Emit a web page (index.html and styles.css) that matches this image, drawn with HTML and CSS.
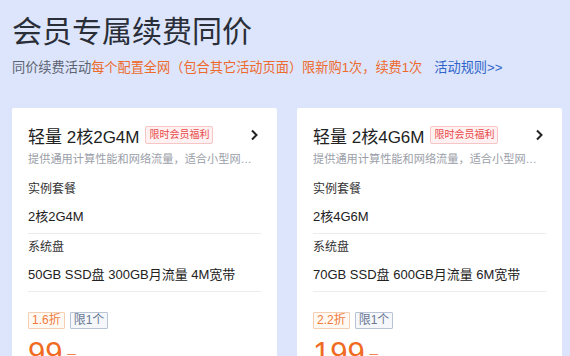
FILE: index.html
```html
<!DOCTYPE html>
<html lang="zh">
<head>
<meta charset="utf-8">
<link rel="stylesheet" href="styles.css">
</head>
<body>
<div class="page">
  <h1 class="title">会员专属续费同价</h1>
  <p class="sub"><span class="gray">同价续费活动</span><span class="orange">每个配置全网（包合其它活动页面）限新购1次，续费1次</span><a class="rule">活动规则&gt;&gt;</a></p>
  <div class="cards">
    <div class="card">
      <div class="head">
        <span class="name">轻量 2核2G4M</span>
        <span class="badge">限时会员福利</span>
        <svg class="chev" width="9" height="12" viewBox="0 0 9 12"><path d="M2 1.5 L6.5 6 L2 10.5" fill="none" stroke="#222" stroke-width="2"/></svg>
      </div>
      <div class="desc">提供通用计算性能和网络流量，适合小型网站、博客等场景</div>
      <div class="sec">
        <div class="label">实例套餐</div>
        <div class="value">2核2G4M</div>
      </div>
      <div class="sec">
        <div class="label">系统盘</div>
        <div class="value">50GB SSD盘 300GB月流量 4M宽带</div>
      </div>
      <div class="tags"><span class="tag disc">1.6折</span><span class="tag lim">限1个</span></div>
      <div class="price"><span class="num">99</span><span class="unit">元</span></div>
    </div>
    <div class="card">
      <div class="head">
        <span class="name">轻量 2核4G6M</span>
        <span class="badge">限时会员福利</span>
        <svg class="chev" width="9" height="12" viewBox="0 0 9 12"><path d="M2 1.5 L6.5 6 L2 10.5" fill="none" stroke="#222" stroke-width="2"/></svg>
      </div>
      <div class="desc">提供通用计算性能和网络流量，适合小型网站、博客等场景</div>
      <div class="sec">
        <div class="label">实例套餐</div>
        <div class="value">2核4G6M</div>
      </div>
      <div class="sec">
        <div class="label">系统盘</div>
        <div class="value">70GB SSD盘 600GB月流量 6M宽带</div>
      </div>
      <div class="tags"><span class="tag disc">2.2折</span><span class="tag lim">限1个</span></div>
      <div class="price"><span class="num">199</span><span class="unit">元</span></div>
    </div>
  </div>
</div>
</body>
</html>
```
FILE: styles.css
```css
* { box-sizing: border-box; }
html, body { margin: 0; padding: 0; }
body {
  background: #dce5fb;
  font-family: "Liberation Sans", "Noto Sans CJK SC", sans-serif;
  color: #222;
  overflow: hidden;
  height: 356px;
}
.page { padding: 0 9px 0 12px; }
.title {
  margin: 0;
  padding-top: 12px;
  font-size: 30px;
  line-height: 40px;
  font-weight: 400;
  color: #2a2e38;
}
.sub {
  margin: 6px 0 0;
  font-size: 13.2px;
  line-height: 20px;
}
.gray { color: #5b6270; }
.orange { color: #ee6a2c; }
.rule { color: #2f64c9; margin-left: 12px; }
.cards {
  display: grid;
  grid-template-columns: 265px 265px;
  gap: 20px;
  margin-top: 30px;
}
.card {
  background: #fff;
  border-radius: 2px;
  padding: 15px 16px 0;
  height: 260px;
}
.head {
  display: flex;
  align-items: center;
  height: 24px;
}
.name { font-size: 17px; color: #222; }
.badge {
  margin-left: 6px;
  font-size: 10px;
  line-height: 14px;
  padding: 1px 3px;
  color: #e84a4a;
  background: #fff1f1;
  border: 1px solid #f6c6c6;
  border-radius: 2px;
}
.chev { margin-left: auto; margin-right: 2px; }
.desc {
  margin-top: 3px;
  font-size: 11.2px;
  line-height: 18px;
  color: #9a9ea8;
  white-space: nowrap;
  overflow: hidden;
  text-overflow: ellipsis;
  width: 231px;
}
.sec {
  border-bottom: 1px solid #ececee;
  padding-bottom: 6px;
}
.label {
  margin-top: 12px;
  font-size: 12px;
  line-height: 18px;
  color: #333;
}
.sec + .sec .label { margin-top: 4px; }
.value {
  margin-top: 9px;
  font-size: 13px;
  line-height: 20px;
  color: #222;
}
.tags { display: flex; gap: 5px; margin-top: 20px; }
.tag {
  font-size: 12px;
  line-height: 15px;
  padding: 0 3px;
  border-radius: 1px;
}
.disc { color: #ef7b3c; border: 1px solid #f4cfb4; background: #fff9f4; }
.lim { color: #697792; border: 1px solid #b9c3d6; background: #f5f7fb; }
.price { margin-top: 7px; color: #f06a22; line-height: 36px; }
.num { font-size: 31px; }
.unit { font-size: 12px; margin-left: 3px; }
```
